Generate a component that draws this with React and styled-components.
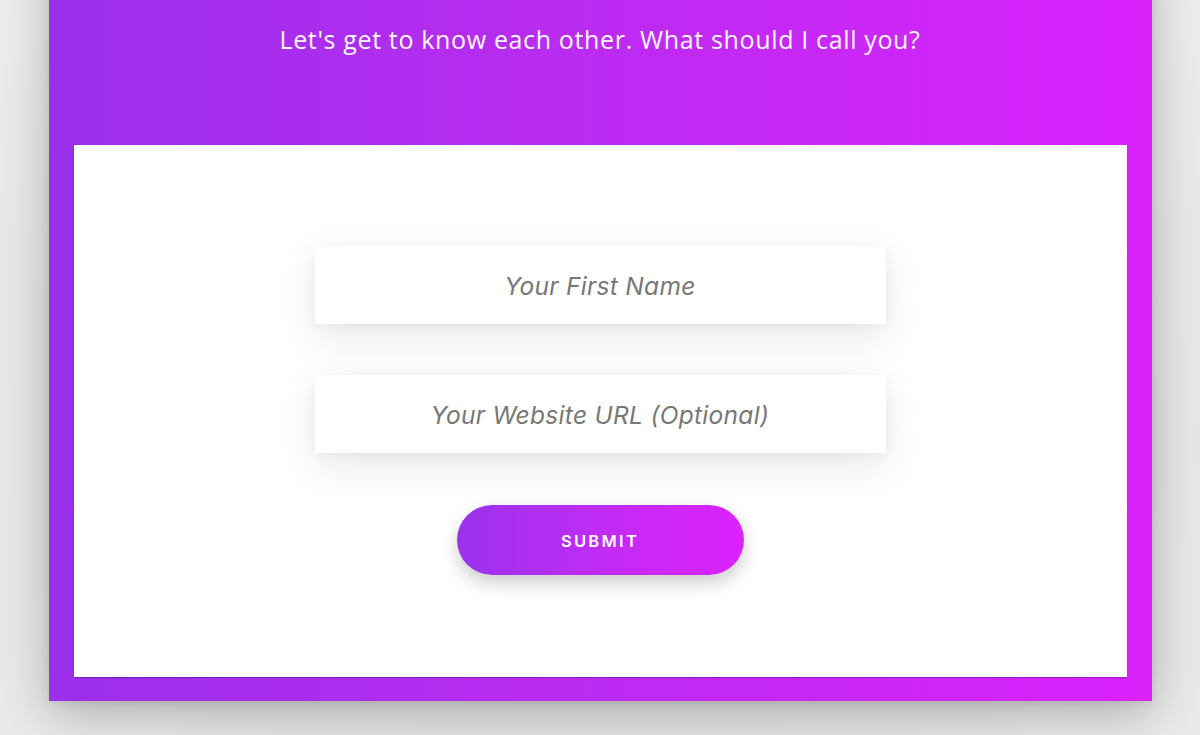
import React from "react";
import styled, { createGlobalStyle } from "styled-components";

const GlobalStyle = createGlobalStyle`
  html, body {
    margin: 0;
    padding: 0;
    height: 100%;
    background: #ececec;
    overflow: hidden;
  }
  #root {
    height: 100%;
  }
`;

const Page = styled.div`
  display: flex;
  justify-content: center;
  height: 100%;
  background: radial-gradient(ellipse at 50% 60%, #dcdcdc 0%, #e4e4e4 60%, #ededed 100%);
`;

const Card = styled.section`
  width: 1103px;
  margin-top: -80px;
  align-self: flex-start;
  padding: 0 25px 24px;
  box-sizing: border-box;
  background: linear-gradient(90deg, #9a2fea 0%, #b92cf0 45%, #da22fd 100%);
  box-shadow: 0 12px 44px rgba(0, 0, 0, 0.24), 0 2px 8px rgba(0, 0, 0, 0.08);
`;

const Header = styled.header`
  display: flex;
  flex-direction: column;
  align-items: center;
  height: 225px;
  color: #fff;
`;

const Title = styled.h1`
  margin: 0;
  height: 70px;
  display: flex;
  align-items: flex-end;
  font-family: "Open Sans", sans-serif;
  font-weight: 400;
  font-size: 40px;
  line-height: 1;
`;

const Subtitle = styled.p`
  margin: 37px 0 0;
  font-family: "Open Sans", sans-serif;
  font-weight: 400;
  font-size: 25px;
  letter-spacing: 0.65px;
  line-height: 1;
  color: #fdf6ff;
`;

const Panel = styled.div`
  background: #fff;
  padding: 101px 0 102px;
  display: flex;
  flex-direction: column;
  align-items: center;
  gap: 51px;
  box-shadow: 0 1px 1px rgba(60, 0, 80, 0.35);
`;

const Field = styled.input`
  width: 571px;
  height: 78px;
  border: none;
  outline: none;
  box-sizing: border-box;
  padding-top: 3px;
  background: #fff;
  text-align: center;
  font-family: Inter, "Noto Sans", sans-serif;
  font-style: italic;
  font-size: 24.5px;
  letter-spacing: 0.3px;
  color: #555;
  box-shadow: 0 12px 40px rgba(0, 0, 0, 0.1), 0 2px 10px rgba(0, 0, 0, 0.04);

  &::placeholder {
    color: #777;
  }
`;

const SubmitButton = styled.button`
  width: 287px;
  height: 70px;
  margin-top: 1px;
  border: none;
  border-radius: 35px;
  padding-top: 3px;
  background: linear-gradient(90deg, #9a33ec 0%, #c52af6 55%, #db22fc 100%);
  color: #fff;
  font-family: Inter, "Noto Sans", sans-serif;
  font-weight: 600;
  font-size: 16.5px;
  letter-spacing: 2.3px;
  cursor: pointer;
  box-shadow: 0 8px 18px rgba(0, 0, 0, 0.2);
`;

export default function App() {
  return (
    <>
      <GlobalStyle />
      <Page>
        <Card>
          <Header>
            <Title>Hey, I'm glad you're here</Title>
            <Subtitle>Let's get to know each other. What should I call you?</Subtitle>
          </Header>
          <Panel>
            <Field placeholder="Your First Name" />
            <Field placeholder="Your Website URL (Optional)" />
            <SubmitButton type="button">SUBMIT</SubmitButton>
          </Panel>
        </Card>
      </Page>
    </>
  );
}
